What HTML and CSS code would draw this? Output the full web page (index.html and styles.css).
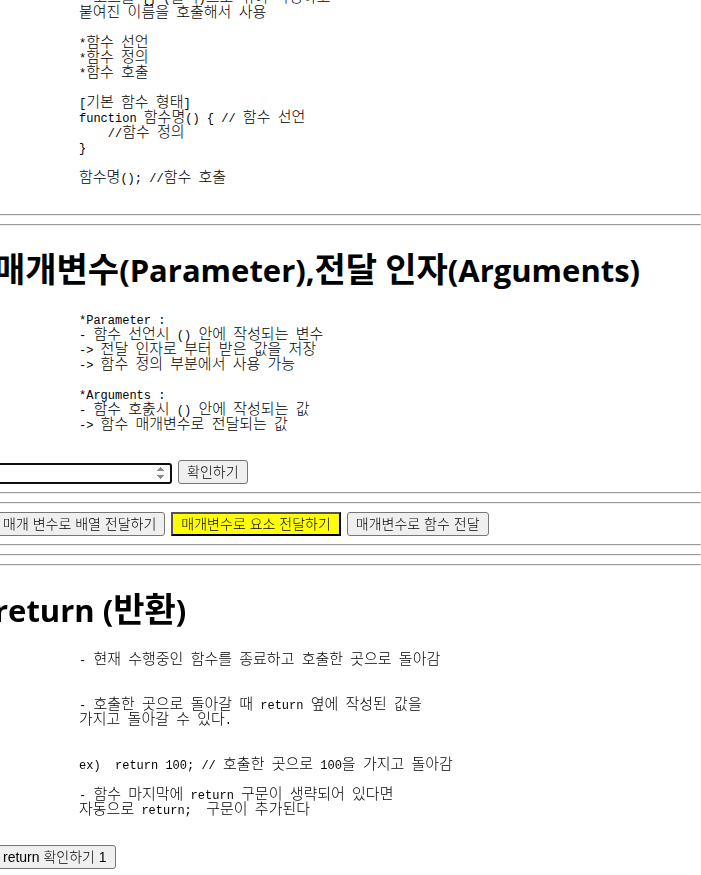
FILE: index.html
```html
<!DOCTYPE html>
<html lang="ko">
<head>
<meta charset="UTF-8">
<title>함수</title>
<link rel="stylesheet" href="styles.css">
</head>
<body>
<pre class="first">- <span>코드를</span> {} (<span>블럭</span>)<span>으로</span> <span>묶어</span> <span>작성하고</span>
<span>붙여진</span> <span>이름을</span> <span>호출해서</span> <span>사용</span>

*<span>함수</span> <span>선언</span>
*<span>함수</span> <span>정의</span>
*<span>함수</span> <span>호출</span>

[<span>기본</span> <span>함수</span> <span>형태</span>]
function <span>함수명</span>() { // <span>함수</span> <span>선언</span>
    //<span>함수</span> <span>정의</span>
}

<span>함수명</span>(); //<span>함수</span> <span>호출</span>

</pre>
<hr>
<hr>
<h1><span>매개변수</span>(Parameter),<span>전달</span> <span>인자</span>(Arguments)</h1>
<pre>*Parameter :
- <span>함수</span> <span>선언시</span> () <span>안에</span> <span>작성되는</span> <span>변수</span>
-&gt; <span>전달</span> <span>인자로</span> <span>부터</span> <span>받은</span> <span>값을</span> <span>저장</span>
-&gt; <span>함수</span> <span>정의</span> <span>부분에서</span> <span>사용</span> <span>가능</span>

*Arguments :
- <span>함수</span> <span>호춠시</span> () <span>안에</span> <span>작성되는</span> <span>값</span>
-&gt; <span>함수</span> <span>매개변수로</span> <span>전달되는</span> <span>값</span>

</pre>
<div class="row">
<input type="number" aria-label="숫자 입력" autofocus>
<button type="button">확인하기</button>
</div>
<hr>
<hr>
<div class="row">
<button type="button">매개 변수로 배열 전달하기</button>
<button type="button" class="yellow">매개변수로 요소 전달하기</button>
<button type="button">매개변수로 함수 전달</button>
</div>
<hr>
<hr>
<hr>
<h1>return (<span>반환</span>)</h1>
<pre>- <span>현재</span> <span>수행중인</span> <span>함수를</span> <span>종료하고</span> <span>호출한</span> <span>곳으로</span> <span>돌아감</span>


- <span>호출한</span> <span>곳으로</span> <span>돌아갈</span> <span>때</span> return <span>옆에</span> <span>작성된</span> <span>값을</span>
<span>가지고</span> <span>돌아갈</span> <span>수</span> <span>있다</span>.


ex)  return 100; // <span>호출한</span> <span>곳으로</span> 100<span>을</span> <span>가지고</span> <span>돌아감</span>

- <span>함수</span> <span>마지막에</span> return <span>구문이</span> <span>생략되어</span> <span>있다면</span>
<span>자동으로</span> return;  <span>구문이</span> <span>추가된다</span>

</pre>
<div class="row">
<button type="button">return 확인하기 1</button>
</div>
</body>
</html>
```
FILE: styles.css
```css
html {
  overflow: hidden;
}

body {
  margin: 0 0 0 -6px;
  background: #fff;
  color: #000;
  font-family: "Liberation Sans", "Noto Sans CJK KR", sans-serif;
}

pre {
  margin: 13px 0 11px;
  padding: 2px 0 0 85px;
  font: 12px/15px "Liberation Mono", "Noto Sans CJK KR", monospace;
}

pre.first {
  margin-top: -10px;
  margin-bottom: 12px;
}

pre span {
  font-family: "Noto Sans CJK KR", sans-serif;
  font-size: 15px;
  font-weight: 300;
  line-height: 1px;
}

hr {
  margin: 8px 0;
}

h1 {
  margin: 21px 0;
  padding-top: 2px;
  font: bold 31px/42px "Open Sans", "Noto Sans CJK KR", sans-serif;
  white-space: nowrap;
}

h1 span {
  font-family: "Noto Sans CJK KR", sans-serif;
  font-size: 34px;
  line-height: 1px;
}

.row {
  display: flex;
  align-items: flex-end;
  gap: 6px;
}

button {
  height: 24px;
  padding: 0 8px;
  border: 1px solid #767676;
  border-radius: 3px;
  background: #efefef;
  color: #000;
  font: 300 14px/20px "Liberation Sans", "Noto Sans CJK KR", sans-serif;
  white-space: nowrap;
}

button.yellow {
  border: 2px outset #000;
  border-radius: 0;
  background: #ff0;
}

input {
  box-sizing: border-box;
  width: 178px;
  height: 21px;
  padding: 1px 2px;
  border: 2px solid #101010;
  border-radius: 3px;
  outline: 0;
  font: 13px "Liberation Sans", sans-serif;
}

input::-webkit-inner-spin-button {
  opacity: 1;
}
```
